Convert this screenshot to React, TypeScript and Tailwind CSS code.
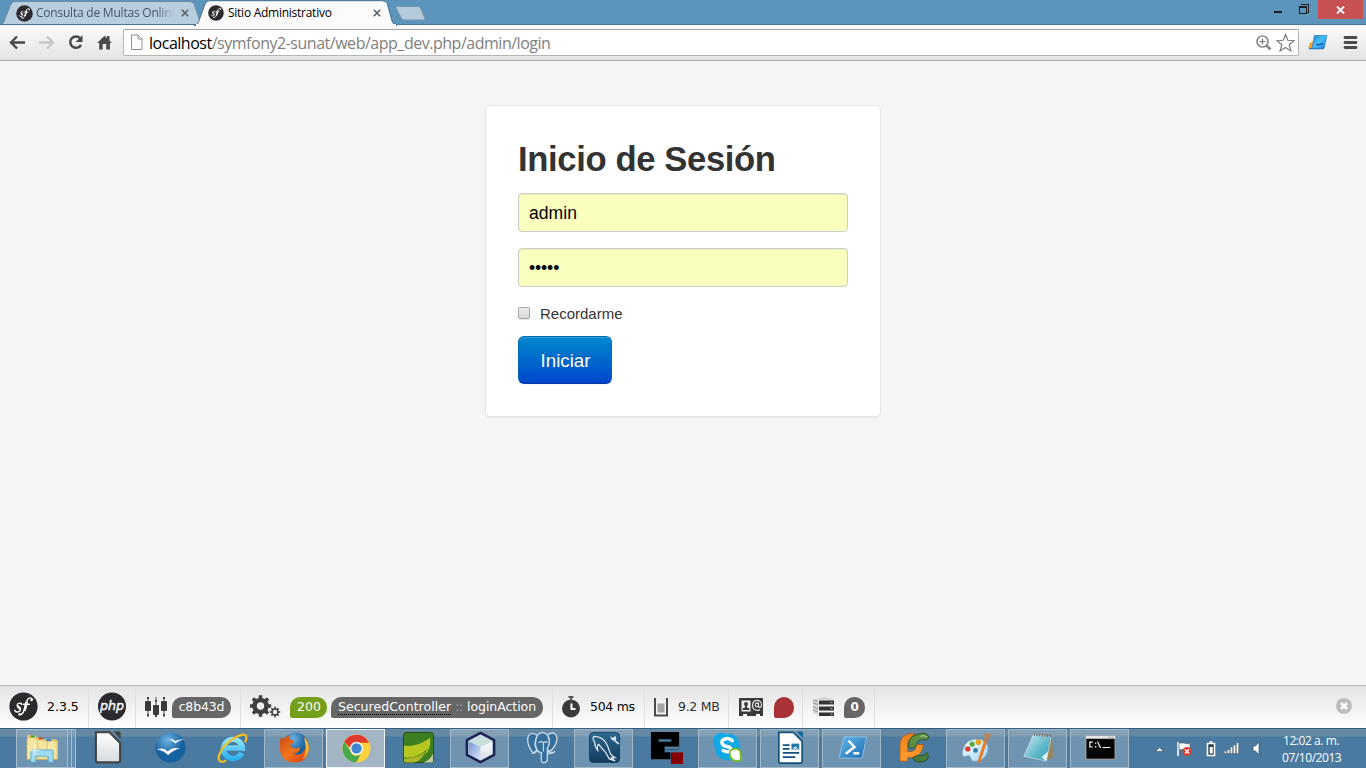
import React, { ReactNode } from "react";

const UI = "font-['Open_Sans','Noto_Sans',sans-serif]";

function SfLogo({ size, className = "" }: { size: number; className?: string }) {
  return (
    <svg width={size} height={size} viewBox="0 0 30 30" className={`shrink-0 ${className}`}>
      <circle cx="15" cy="15" r="14.6" fill="#2c2a2f" />
      <path
        d="M13 13c.4-2.100-4.300-2-4.600.5-.2 2.300 4 2.700 3.400 5.200-.6 2.500-5.600 2.500-5.800.2M24 7.800c-.2-2.500-3.900-2.300-5.200.7-1.400 3.500-2.100 8-3.600 11.500-1.200 2.900-3 4-4.800 3.500M15 12.700h6"
        fill="none"
        stroke="#fff"
        strokeWidth="1.500"
        strokeLinecap="round"
      />
      <circle cx="23.300" cy="8.200" r="1.300" fill="#fff" />
      <circle cx="10.900" cy="22.900" r="1.100" fill="#fff" />
      <path d="M18.400 10c-.8 3-1.200 6-2.500 9.500M9 14.500l2.500 3" stroke="#fff" strokeWidth="2.600" fill="none" />
    </svg>
  );
}

function TabClose() {
  return (
    <svg width="8" height="8" viewBox="0 0 8 8" className="shrink-0">
      <path d="M.8.8l6.400 6.400M7.200.8L.8 7.200" stroke="#55606a" strokeWidth="1.600" />
    </svg>
  );
}

function TitleBar() {
  return (
    <div className="relative flex h-[25px] shrink-0 bg-[#5c94bb]">
      <svg className="absolute left-0 top-0" width="1366" height="26" viewBox="0 0 1366 26">
        <path d="M0 24.500h1q2-.5 3-3L10.500 5q1.300-3.500 4.500-3.500H190q3 0 4.300 3L200 21q1 3 4 3.500z" fill="#b8cddd" stroke="#6c8aa3" />
        <path d="M0 24.500H1366" stroke="#4a7596" />
        <path d="M194 25.500q3-.3 4.500-3.500L205 4q1.200-3 4.500-3.300H382.500q3.500 0 4.800 3L392 21q1.300 4 5 4.500z" fill="#fbfbfb" stroke="#456f91" />
        <path d="M196 26h200v-2H196z" fill="#fafafa" />
        <path d="M396.500 6.500H418q2 0 2.800 2l4 9.500q.7 2-1.300 2H404q-2 0-2.800-2L396 8q-.5-1.500.5-1.500z" fill="#b5cbdb" stroke="#7592ac" />
      </svg>
      <div className={`relative flex w-[200px] items-center pl-[16px] pt-px text-[12px] text-[#44576a] ${UI}`}>
        <SfLogo size={17} />
        <span className="ml-[3px] w-[140px] overflow-hidden whitespace-nowrap tracking-[-0.220px] [mask-image:linear-gradient(to_right,black_86%,transparent_99%)]">
          Consulta de Multas Online
        </span>
        <span className="ml-[5px]"><TabClose /></span>
      </div>
      <div className={`relative flex w-[196px] items-center pl-[8px] pt-px text-[12px] text-black ${UI}`}>
        <SfLogo size={16} />
        <span className="ml-[4px] w-[145px] whitespace-nowrap tracking-[-0.260px]">Sitio Administrativo</span>
        <TabClose />
      </div>
      <div className="relative ml-auto flex">
        <svg width="46" height="20" viewBox="0 0 46 20" shapeRendering="crispEdges">
          <path d="M2 11h8v2H2z" fill="#1d1d1d" />
          <path d="M27.500 6.500h7v7h-7zM29.500 5V4.500H36.500V12h-1.500" fill="none" stroke="#1d1d1d" />
          <path d="M27 7h8" stroke="#1d1d1d" strokeWidth="2" />
        </svg>
        <div className="mr-[3px] flex h-[19px] w-[45px] items-center justify-center bg-[#c75050]">
          <svg width="9" height="8" viewBox="0 0 9 8">
            <path d="M1 .5l7 7M8 .5l-7 7" stroke="#fff" strokeWidth="1.900" />
          </svg>
        </div>
      </div>
    </div>
  );
}

function AddressBar() {
  return (
    <div className="flex h-[36px] shrink-0 items-start border-b border-[#aaa] bg-linear-to-b from-[#fbfbfb] to-[#e4e4e4]">
      <svg width="123" height="35" viewBox="0 25 123 35" fill="none" className="shrink-0">
        <path d="M25 42.500H12M17 36.500l-6 6 6 6" stroke="#4a4a4a" strokeWidth="2.400" />
        <path d="M39 42.500H52.500M47 36.500l6 6-6 6" stroke="#c6c6c6" strokeWidth="2.400" />
        <path d="M80.200 38.300a5.700 5.700 0 1 0 .8 6.500" stroke="#4a4a4a" strokeWidth="2.500" />
        <path d="M82.500 35v7h-7z" fill="#4a4a4a" />
        <path d="M97.200 43l7.300-7.300 2.500 2.400V36h2.500v4.600l2.400 2.400h-2v6.500h-3.700V44h-3.500v5.500h-3.500V43z" fill="#4a4a4a" />
      </svg>
      <div className="mt-[4px] flex h-[27px] w-[1176px] items-center rounded-[2px] border border-[#b4b4b4] border-t-[#a0a0a0] bg-white">
        <svg width="13" height="17" viewBox="0 0 13 17" className="ml-[6px] mr-px shrink-0">
          <path d="M1.500 1h6.500l4 4v10.500H1.500zM8 1v4h4" fill="#fdfdfd" stroke="#909090" />
        </svg>
        <div className={`ml-[5px] grow whitespace-nowrap text-[16px] tracking-[-0.480px] text-[#808080] ${UI}`}>
          <span className="text-black">localhost</span>/symfony2-sunat/web/app_dev.php/admin/login
        </div>
        <svg width="42" height="20" viewBox="1255 33 42 20" fill="none" className="mr-[1px]">
          <circle cx="1262.500" cy="41.500" r="5.500" stroke="#8c8c8c" strokeWidth="1.700" />
          <path d="M1259.500 41.500h6M1262.500 38.500v6" stroke="#777" strokeWidth="1.200" />
          <path d="M1266.500 45.500l4 4" stroke="#8c8c8c" strokeWidth="2.600" />
          <path d="M1285.500 34.500l2.300 5.800 6.200.4-4.800 4 1.700 6.300-5.400-3.500-5.400 3.500 1.700-6.300-4.800-4 6.200-.4z" stroke="#7c7c7c" strokeWidth="1.200" />
        </svg>
      </div>
      <svg width="62" height="35" viewBox="1304 25 62 35" className="ml-[5px] shrink-0">
        <defs>
          <linearGradient id="ext" x1="0" y1="0" x2="1" y2="1"><stop stopColor="#2678c8" /><stop offset=".45" stopColor="#44c1ff" /><stop offset="1" stopColor="#1475dc" /></linearGradient>
        </defs>
        <path d="M1308.500 48l1.500-6 2 1 2-5v11h-5z" fill="#f5a321" />
        <path d="M1314.500 35.500h12.500l-3 13h-12z" fill="url(#ext)" stroke="#2678b9" strokeWidth=".7" />
        <path d="M1309 48.700h14.500" stroke="#2c82c4" strokeWidth="1.300" />
        <path d="M1316 44l2 .8 5-1.300" stroke="#123f76" fill="none" />
        <path d="M1345 37.500h11M1345 42.500h11M1345 47.500h11" stroke="#4b4b4b" strokeWidth="2.800" strokeLinecap="round" />
      </svg>
    </div>
  );
}

const field =
  "block h-[39px] w-full rounded-[4px] border border-[#ccc] bg-[#faffbd] px-[10px] pt-[2px] text-[17.600px] text-black shadow-[inset_0_1px_1px_rgba(0,0,0,0.075)] outline-none";

function LoginForm() {
  return (
    <form className="mx-auto mt-[44px] h-[312px] w-[396px] rounded-[5px] border border-[#e5e5e5] bg-white px-[32px] pt-[31px] font-['Liberation_Sans',Arial,sans-serif] text-[#333] shadow-[0_1px_2px_rgba(0,0,0,0.05)]">
      <h1 className="h-[56px] whitespace-nowrap text-[34.650px] font-bold leading-[44px] tracking-[-0.380px]">Inicio de Sesión</h1>
      <input className={field} defaultValue="admin" />
      <input className={`${field} mt-[16px] tracking-[-0.120px]`} type="password" defaultValue="admin" />
      <label className="mt-[16px] flex h-[22px] items-center text-[15px]">
        <span className="mb-[2px] mr-[10px] h-[12px] w-[12px] rounded-[2px] border border-[#a8a8a8] bg-linear-to-b from-[#ececec] to-[#d8d8d8] shadow-[0_1px_1px_rgba(0,0,0,0.1)]" />
        Recordarme
      </label>
      <button
        type="button"
        className="mt-[11px] block h-[48px] w-[94px] rounded-[6px] border border-[#0068b4] border-b-[#003c9c] bg-linear-to-b from-[#0088cc] to-[#0044cc] pl-px pt-[2px] text-[18.700px] text-white shadow-[inset_0_1px_0_rgba(255,255,255,0.2),0_1px_2px_rgba(0,0,0,0.05)] [text-shadow:0_-1px_0_rgba(0,0,0,0.25)]"
      >
        Iniciar
      </button>
    </form>
  );
}

function Segment({ className, children }: { className: string; children: ReactNode }) {
  return <div className={`flex h-full shrink-0 items-center border-r border-[#e0e0e0] ${className}`}>{children}</div>;
}

const pill = "flex h-[21px] items-center justify-center rounded-[10px] rounded-bl-[2px] bg-[#666] text-white";

function gearPath(cx: number, cy: number, outer: number, inner: number, teeth: number) {
  const pts: string[] = [];
  for (let i = 0; i < teeth; i++) {
    const base = (i / teeth) * Math.PI * 2;
    const step = (Math.PI * 2) / teeth;
    [[-0.28, inner], [-0.2, outer], [0.2, outer], [0.28, inner]].forEach(([o, r]) =>
      pts.push(`${(cx + Math.cos(base + o * step) * r).toFixed(2)} ${(cy + Math.sin(base + o * step) * r).toFixed(2)}`),
    );
  }
  return `M${pts.join("L")}Z`;
}

function DebugToolbar() {
  return (
    <div className="flex h-[43px] shrink-0 border-t border-[#b8b8b8] bg-linear-to-b from-[#e4e4e4] to-white font-['DejaVu_Sans',Verdana,sans-serif] text-[12.500px] tracking-[-0.300px] text-[#2f2f2f]">
      <Segment className="w-[89px] pl-[9px]">
        <SfLogo size={29} className="mb-px mr-[9px]" />
        <span className="tracking-[0px] text-black">2.3.5</span>
      </Segment>
      <Segment className="w-[47px] pl-[9px]">
        <svg width="28" height="30" viewBox="0 0 28 30">
          <circle cx="14" cy="14.500" r="14" fill="#2c2a2f" />
          <text x="14" y="18" textAnchor="middle" fontFamily="DejaVu Sans" fontStyle="italic" fontSize="12.500" letterSpacing="0" textLength="24" lengthAdjust="spacingAndGlyphs" fill="#fff" stroke="#fff" strokeWidth=".4">php</text>
        </svg>
      </Segment>
      <Segment className="w-[105px] pl-[9px]">
        <svg width="22" height="22" viewBox="0 0 22 22" className="mr-[5px]">
          <path d="M3 1v20M11 1v20M19 1v20" stroke="#888" strokeWidth="1.600" />
          <path d="M2 1h2v2H2zM10 4h2v2h-2zM18 1h2v2h-2zM2 18h2v2H2zM10 19h2v2h-2zM18 18h2v2h-2z" fill="#444" />
          <rect x="0" y="5" width="6" height="10" rx="1" fill="#3a3a3a" />
          <rect x="8" y="9" width="6" height="10" rx="1" fill="#3a3a3a" />
          <rect x="16" y="5" width="6" height="10" rx="1" fill="#3a3a3a" />
        </svg>
        <span className={`${pill} w-[59px] tracking-[-0.150px]`}>c8b43d</span>
      </Segment>
      <Segment className="w-[312px] pl-[9px]">
        <svg width="31" height="24" viewBox="0 0 31 24" className="mr-[9px]">
          <path d={gearPath(10.5, 11, 10.8, 8.3, 8)} fill="#3f3f3f" />
          <circle cx="10.500" cy="11" r="3.700" fill="#efefef" />
          <path d={gearPath(25, 17, 5.2, 3.8, 8)} fill="#3f3f3f" />
          <circle cx="25" cy="17" r="2.200" fill="#f6f6f6" />
        </svg>
        <span className="flex h-[21px] w-[37px] items-center justify-center rounded-[10px] rounded-bl-[2px] bg-[#759e1a] pl-px tracking-[0px] text-white">200</span>
        <span className={`${pill} ml-[4px] w-[212px] whitespace-nowrap`}>
          <span className="h-[16px] border-b border-dotted border-black leading-[16px] tracking-[0.050px]">SecuredController</span>
          <span className="mx-[4px] text-[#aaa]">::</span>
          <span className="tracking-[-0.050px]">loginAction</span>
        </span>
      </Segment>
      <Segment className="w-[92px] pl-[9px]">
        <svg width="18" height="22" viewBox="0 0 18 22" className="mr-[10px]">
          <circle cx="9" cy="12.500" r="9" fill="#3a3a3a" />
          <path d="M6.500 1h5M9 1v4" stroke="#555" strokeWidth="2" />
          <path d="M9.500 7.500v5.500h4" fill="none" stroke="#fff" strokeWidth="2" />
        </svg>
        <span className="whitespace-nowrap text-black">504 ms</span>
      </Segment>
      <Segment className="w-[84px] pl-[9px]">
        <svg width="14" height="20" viewBox="0 0 14 20" className="mr-[10px]">
          <path d="M1 1v17.500h12V1" fill="none" stroke="#4a4a4a" strokeWidth="2" />
          <path d="M3.500 6.500h7v9h-7z" fill="#a5a5a5" />
        </svg>
        <span className="whitespace-nowrap">9.2 MB</span>
      </Segment>
      <Segment className="w-[74px] pl-[10px]">
        <svg width="24" height="20" viewBox="0 0 24 20" className="mr-[11px]">
          <path d="M0 1h24v18h-3v-2h-4v2h-9v-2H4v2H0z" fill="#3a3a3a" />
          <path d="M2.500 3.500h9v11h-9z" fill="#f0f0f0" />
          <circle cx="7" cy="7" r="2" fill="#3a3a3a" />
          <path d="M6 8h2v2.500q2.700.3 2.700 2.500H3.300q0-2.200 2.700-2.500z" fill="#3a3a3a" />
          <path d="M21 12.500c-2 1.600-7.500 1.300-7.500-4.200 0-6.500 9-6.500 9-.5 0 3.700-3 3.200-3 1V5.500m0 2.200c0-2.600-3.300-2.400-3.300.3s3.300 2.400 3.300 0" fill="none" stroke="#eee" strokeWidth="1.100" />
        </svg>
        <span className="h-[21px] w-[20px] rounded-[10px] rounded-bl-[2px] bg-[#a83235]" />
      </Segment>
      <Segment className="w-[72px] pl-[9px]">
        <svg width="23" height="20" viewBox="0 0 23 20" className="mr-[9px]">
          <path d="M1 3l11-3 9 2v1H6v15l-5-2z" fill="#d4d4d4" />
          <path d="M1 3l5 1.500M1 6l5 1.500M1 10l5 1.500M1 13l5 1.500" stroke="#999" fill="none" />
          <path d="M7 3.500h15v4H7zM7 9.500h15v4H7zM7 15.500h15V19H7z" fill="#333" />
          <path d="M18.500 5.500h2M18.500 11.500h2M18.500 17.300h2" stroke="#bbb" strokeWidth="1" />
        </svg>
        <span className={`${pill} w-[21px] text-[12px] font-bold`}>0</span>
      </Segment>
      <svg width="16" height="16" viewBox="0 0 16 16" className="ml-auto mr-[14px] mt-[12px]">
        <circle cx="8" cy="8" r="8" fill="#bdbdbd" />
        <path d="M5 5l6 6M11 5l-6 6" stroke="#fff" strokeWidth="2.500" />
      </svg>
    </div>
  );
}

function Icon({ children }: { children: ReactNode }) {
  return <svg width="33" height="33" viewBox="0 0 34 34" className="mb-[2px] ml-px shrink-0">{children}</svg>;
}

const icons: Record<string, ReactNode> = {
  explorer: (
    <Icon>
      <path d="M1 7V4.500h9l1 2h5l1 2h14l2 2V29H1z" fill="#e8c968" />
      <path d="M2 7h9v2h8v1h11l2 3v16H1V10z" fill="#f6e6a0" stroke="#d4b255" strokeWidth=".7" />
      <path d="M12 9v20M22 10v19" stroke="#e0c573" />
      <path d="M5 4.500h4v2H5z" fill="#2aa745" /><path d="M13 6.500h4v2h-4z" fill="#c43e2b" /><path d="M21 8.500h5v2h-5z" fill="#2e86d1" />
      <path d="M5 32V21q0-1.500 1.500-1.500h20Q28 19.500 28 21v11h-5v-6H10v6z" fill="#9edcf4" stroke="#62afd0" />
      <path d="M9 15v10M4.500 20h9" stroke="#fff" strokeWidth=".9" />
    </Icon>
  ),
  libre: (
    <Icon>
      <path d="M5 2h14l11 11v18q0 2-2 2H6q-1 0-1-2z" fill="url(#paper)" stroke="#444" strokeWidth="2.200" transform="translate(-1 -.7)" />
      <path d="M22 .5h6q1.500 0 1.500 1.500v6z" fill="#444" />
    </Icon>
  ),
  openoffice: (
    <Icon>
      <circle cx="17" cy="17" r="15.500" fill="url(#blueball)" />
      <path d="M15 9q5-1.500 7 1.500Q25 8 31 9q-6 .7-9 4-2-3-7-4z" fill="#fff" />
      <path d="M3 19q7-2.500 11 2 5-5 13-3-7 1-12.500 7Q11 20 3 19z" fill="#fff" />
    </Icon>
  ),
  ie: (
    <Icon>
      <path d="M26.500 22.500a9.800 9.800 0 1 1 .8-5H10" fill="none" stroke="url(#cyan)" strokeWidth="5.500" />
      <path d="M10.500 30.500C4 34 .5 30 4.500 22 10 10 27 1.500 30.500 4.500q2 1.700-.6 7" fill="none" stroke="#f3bd21" strokeWidth="2.300" />
    </Icon>
  ),
  firefox: (
    <Icon>
      <circle cx="18" cy="15" r="13.500" fill="url(#blueball)" />
      <path d="M3 6q1 1.500 3.500 2Q8 5 12 4q-1 3 .5 4.500 3 .5 4.500 2-.5 2-4 3-.5 3 2.500 4 3 1 5-.5 2.500 0 2.500 1.500-3 5.500-8 4.500Q22 27 27 20q3-4 1-10 4 5 3.500 10Q30 32 17 32.500 3 32 2 19 1.500 11 3 6z" fill="url(#fire)" />
      <path d="M27 6q6 6 4.500 14-1.500 6-6 9 4.500-8 2.500-15-.5-4-1-8z" fill="#f7b32d" />
    </Icon>
  ),
  chrome: (
    <Icon>
      <circle cx="17" cy="18" r="14.500" fill="#fcd23a" />
      <path d="M4.400 11A14.500 14.500 0 0 1 30 12H17a6 6 0 0 0-6 6z" fill="#df3a30" />
      <path d="M4.400 11A14.500 14.500 0 0 0 16.500 32.500l5.500-9.500a6 6 0 0 1-11-2z" fill="#46a94d" />
      <circle cx="17" cy="18" r="6.800" fill="#f4f4f4" /><circle cx="17" cy="18" r="5.300" fill="#3f86d0" />
    </Icon>
  ),
  suse: (
    <Icon>
      <rect x="1.500" y="1.500" width="31" height="31" rx="3" fill="#3d7f20" stroke="#284f1b" />
      <path d="M2 15q14 2 27-8 1 13-6 18-9 6-21 3z" fill="#b7c722" />
      <path d="M2 27q15 2 24-9-3 12-13 14H4q-2 0-2-2z" fill="#55861c" />
      <path d="M2 28.500q15 0 22-7-5 11-13 11H4q-2 0-2-2z" fill="#a9ba25" />
      <path d="M32 23v8q0 1.500-1.500 1.500H22q8-3 10-9.500z" fill="#c5c8a2" />
    </Icon>
  ),
  netbeans: (
    <Icon>
      <path d="M17 2l14 7.500v15L17 32 3 24.500v-15z" fill="#c2d6ec" stroke="#1d2353" strokeWidth="2.600" strokeLinejoin="round" />
      <path d="M5 10.500l12-6.500 12 6.500-12 5.500z" fill="#c9dfdc" />
      <path d="M5 11l12 5.500v13.500L5 23.500z" fill="url(#cube)" /><path d="M29 11l-12 5.500v13.500l12-6.500z" fill="url(#paper)" />
    </Icon>
  ),
  postgres: (
    <Icon>
      <path d="M12 5Q6 0 2.500 5 0 12 6 21q3 3 5-2-4-5 1-14zM22 4q8-5 10 3 0 7-6 13-4 2-4-3 4-6 0-13z" fill="#356f9d" stroke="#c9d8e4" strokeWidth="1.400" />
      <path d="M12 4q5-5 10 0 4 7 0 14v12q-1 3-5 2.500-2-1-1-10-4-1-5-4-3-7 1-14.500z" fill="#356f9d" stroke="#c9d8e4" strokeWidth="1.400" />
      <path d="M13 12q3-2 5 0v9M22 12q-3-2-3 0M22 21q5 2 8 0-2 3-8 2M12 20q-3 4-6 3" fill="none" stroke="#c9d8e4" strokeWidth="1.200" />
    </Icon>
  ),
  mysql: (
    <Icon>
      <rect x="1.500" y="1.500" width="31" height="31" rx="4" fill="url(#navy)" stroke="#1d4567" />
      <path d="M6 5.500q8 0 12 6 2.500 4 4 9 1 4.500 6 7l-4 .3 4 3-6-2-4-7q-4-4-7-8-2 1-1 6-3-3-3-8-3-4-1-6.300z" fill="none" stroke="#e2e9ee" strokeWidth="1.300" />
      <path d="M23.500 3.500q-.5 3 2.500 3.500l2-2q2 3 .5 4.500l4 3-1.500 1.500-4.500-4q-4-.5-3-6.500z" fill="#d5e0e8" />
    </Icon>
  ),
  easyphp: (
    <Icon>
      <path d="M1 1h29v18H15v3h6v7H1zM9 8.500v2.500h13V8.500z" fill="#000" fillRule="evenodd" />
      <path d="M15 16h15v3H15z" fill="#4f7c9f" /><path d="M21.500 22H34v12H21.500z" fill="#850000" />
    </Icon>
  ),
  skype: (
    <Icon>
      <path d="M10 2q3 0 4 1 13-1 14 10 3 6-1 10-3 9-12 7-12-2-12-13Q-1 7 4 4q2-2 6-2z" fill="#10a9e6" />
      <path d="M21 10q-3-3-7-2-5 1-3.500 5 1 2 5 3 5 1 4 4-2 3-8 0" fill="none" stroke="#fff" strokeWidth="3.500" strokeLinecap="round" />
      <path d="M19 20q7-4 10 1l1 9q-8 2-10-2-3-4-1-8z" fill="#fff" stroke="#7cbd22" strokeWidth="1.800" />
    </Icon>
  ),
  writer: (
    <Icon>
      <path d="M5 1.500h15l9 9v21q0 1.500-1.500 1.500h-21Q5 33 5 31.500z" fill="#fff" stroke="#14527c" strokeWidth="1.800" />
      <path d="M23 .5h5q2 0 2 2v5z" fill="#12639a" />
      <path d="M9 14.500h7M9 18.500h7M9 22.500h17M9 27h13" stroke="#14527c" strokeWidth="1.800" />
      <path d="M18 13h8v6h-8z" fill="#2676a9" /><path d="M19 18l3-2 3 2z" fill="#fff" />
    </Icon>
  ),
  powershell: (
    <Icon>
      <path d="M9 6h21.500q1 0 .8 1L27 27q-.3 1-1.300 1H4.500q-1.500 0-1-1.500L8 7q.2-1 1-1z" fill="url(#ps)" stroke="#9fcbe7" strokeWidth=".8" />
      <path d="M13 10l6 6.500-9 7M18 23h6" fill="none" stroke="#fff" strokeWidth="2.500" />
    </Icon>
  ),
  phpc: (
    <Icon>
      <path d="M2 31V14Q3 3 14 2.500l4 1.500Q9 8 10 16v5q5 1 8-2l1-5h7q-1 10-8 12-4 2-8 1v4z" fill="url(#orange)" stroke="#b9580f" strokeWidth=".8" />
      <path d="M11 17Q10 5 20 3.500q5-2 9-.5 4 2 2 5-3 2-8 1-3 1-4 5-2 5-8 3z" fill="#5d8f45" stroke="#2f5526" />
      <path d="M23 5.500q4-1.500 7 .5" stroke="#b9d7a2" fill="none" />
      <path d="M15 28q5-4 9-2.500 4 0 5.500-3.500 3 4 1 7-6 5-13 2z" fill="#477b39" stroke="#2c5124" />
    </Icon>
  ),
  paint: (
    <Icon>
      <path d="M3 20Q6 6 22 9q9 4 6 13-3 9-13 9-4 0-4-4-1-3-5-1-5 1-3-6z" fill="url(#palette)" stroke="#88bddd" />
      <circle cx="8" cy="18.500" r="2.700" fill="#dd3e31" /><circle cx="12.500" cy="13.500" r="2.700" fill="#54aa3f" /><circle cx="19" cy="11.500" r="2.900" fill="#eba41f" />
      <circle cx="16" cy="20" r="2.500" fill="#397aa0" />
      <path d="M24.500 11l3 1-7 21-2.500-1z" fill="#e77b25" /><path d="M24 11q2-3 1-9 5 2 9 1-4 3-6 9z" fill="#b98154" />
    </Icon>
  ),
  notepad: (
    <Icon>
      <path d="M13 3l18 2 1 22-5 3z" fill="#9b855b" />
      <path d="M12 3l18 3-5 25L2 26z" fill="url(#note)" stroke="#d5e6e9" strokeWidth=".7" />
      <path d="M20 27l7-6-2 10z" fill="#e5f4f4" />
      <path d="M12 3.500l18 1.500" stroke="#777" strokeWidth="3" strokeDasharray="1.500 1.200" />
    </Icon>
  ),
  cmd: (
    <Icon>
      <path d="M2 5h30v24H2z" fill="#050505" stroke="#aaa" />
      <path d="M2 5h30v3H2z" fill="#e5e5e5" /><path d="M25 6.500h6" stroke="#777" strokeDasharray="1 1" />
      <path d="M9 11.500H6v5h3M12 12v1.500M12 15.500v1.500M14 11l3 6.500M19 17h8" fill="none" stroke="#fff" strokeWidth="1.200" />
    </Icon>
  ),
};

const tasks: [string, boolean][] = [
  ["libre", false], ["openoffice", false], ["ie", false], ["firefox", true], ["chrome", true],
  ["suse", false], ["netbeans", true], ["postgres", false], ["mysql", true], ["easyphp", false],
  ["skype", true], ["writer", true], ["powershell", true], ["phpc", false], ["paint", true],
  ["notepad", true], ["cmd", true],
];

function IconGradients() {
  return (
    <svg width="0" height="0" className="absolute">
      <defs>
        <linearGradient id="paper" x1="0" y1="0" x2="0" y2="1"><stop stopColor="#fff" /><stop offset="1" stopColor="#d5dade" /></linearGradient>
        <radialGradient id="blueball" cx=".4" cy=".25"><stop stopColor="#6db3e5" /><stop offset="1" stopColor="#17619f" /></radialGradient>
        <linearGradient id="cyan" x1="0" y1="0" x2="0" y2="1"><stop stopColor="#8fe4fb" /><stop offset="1" stopColor="#2db2ed" /></linearGradient>
        <linearGradient id="fire" x1="0" y1="0" x2="1" y2="1"><stop stopColor="#c94c14" /><stop offset=".5" stopColor="#f0731b" /><stop offset="1" stopColor="#d93c10" /></linearGradient>
        <linearGradient id="orange" x1="0" y1="0" x2="0" y2="1"><stop stopColor="#e8801a" /><stop offset="1" stopColor="#ff9f2e" /></linearGradient>
        <linearGradient id="cube" x1="0" y1="0" x2="1" y2="1"><stop stopColor="#7594d5" /><stop offset="1" stopColor="#dce8f6" /></linearGradient>
        <linearGradient id="navy" x1="0" y1="0" x2="0" y2="1"><stop stopColor="#2d688f" /><stop offset="1" stopColor="#123b5f" /></linearGradient>
        <linearGradient id="ps" x1="0" y1="0" x2="1" y2="1"><stop stopColor="#62bbea" /><stop offset="1" stopColor="#1b68b4" /></linearGradient>
        <linearGradient id="palette" x1="0" y1="0" x2="1" y2="1"><stop stopColor="#fff" /><stop offset="1" stopColor="#a4d7f0" /></linearGradient>
        <linearGradient id="note" x1="0" y1="0" x2="1" y2="1"><stop stopColor="#d7f0f2" /><stop offset=".6" stopColor="#5bb6c9" /><stop offset="1" stopColor="#3a99b4" /></linearGradient>
      </defs>
    </svg>
  );
}

function Taskbar() {
  return (
    <div className="flex h-[40px] shrink-0 border-t border-[#315f7d] bg-[linear-gradient(to_bottom,#6589a4_0px,#6589a4_7px,#4a7a9f_8px,#4a7a9f_100%)]">
      <IconGradients />
      <div className="ml-[16px] mr-px flex w-[60px]">
        <div className="flex w-[52px] items-center justify-center border border-[#a7bccc] bg-white/20">{icons.explorer}</div>
        <div className="w-[4px] border-y border-r border-[#a7bccc] bg-white/15" />
        <div className="w-[4px] border-y border-r border-[#a7bccc] bg-white/15" />
      </div>
      {tasks.map(([name, open]) => (
        <div key={name} className="flex w-[62px] shrink-0 pl-px">
          <div
            className={
              name === "chrome"
                ? "flex w-[59px] items-center justify-center border border-[#eef3f6] bg-[#a3b5c4]"
                : open
                  ? "flex w-[59px] items-center justify-center border border-[#a2b8c9] bg-white/20"
                  : "flex w-[59px] items-center justify-center"
            }
          >
            {icons[name]}
          </div>
        </div>
      ))}
      <div className="ml-auto flex">
        <svg width="110" height="39" viewBox="1152 729 110 39" className="shrink-0">
          <path d="M1155.500 751.500l4-4 4 4z" fill="#fff" stroke="#294b63" strokeWidth=".6" />
          <path d="M1178 742v14" stroke="#fff" strokeWidth="1.600" />
          <path d="M1179 743h5q3 1 6 0v7h-5q-3-1-6 0z" fill="#fff" stroke="#3c4b56" strokeWidth=".6" />
          <circle cx="1187" cy="751.500" r="4.500" fill="#dd3b2d" /><path d="M1185 749.500l4 4M1189 749.500l-4 4" stroke="#fff" strokeWidth="1.300" />
          <path d="M1207.500 743.500h7v12h-7zM1209.500 742h3" fill="#233c4e" stroke="#fff" strokeWidth="1.600" />
          <path d="M1209.700 747h3v6.500h-3z" fill="#fff" />
          <path d="M1225.500 754v-2M1228.500 754v-3.500M1231.500 754v-6M1234.500 754v-8M1237.500 754v-11" stroke="#203c50" strokeWidth="3.200" />
          <path d="M1225.500 753.500v-2M1228.500 753.500v-3.500M1231.500 753.500v-6M1234.500 753.500v-8M1237.500 753.500v-10.500" stroke="#fff" strokeWidth="2" />
          <path d="M1253 746h2.500l3.500-4v13l-3.500-4h-2.500z" fill="#fff" stroke="#2c4e66" strokeWidth=".7" />
        </svg>
        <div className={`w-[104px] pl-[20px] pt-[3px] text-[12px] leading-[17px] tracking-[-0.440px] text-white ${UI}`}>
          <div className="pl-px">12:02 a. m.</div>
          <div>07/10/2013</div>
        </div>
      </div>
    </div>
  );
}

export default function App() {
  return (
    <div className="flex h-[768px] w-[1366px] flex-col overflow-hidden bg-[#f5f5f5]">
      <TitleBar />
      <AddressBar />
      <main className="min-h-0 grow">
        <LoginForm />
      </main>
      <DebugToolbar />
      <Taskbar />
    </div>
  );
}
